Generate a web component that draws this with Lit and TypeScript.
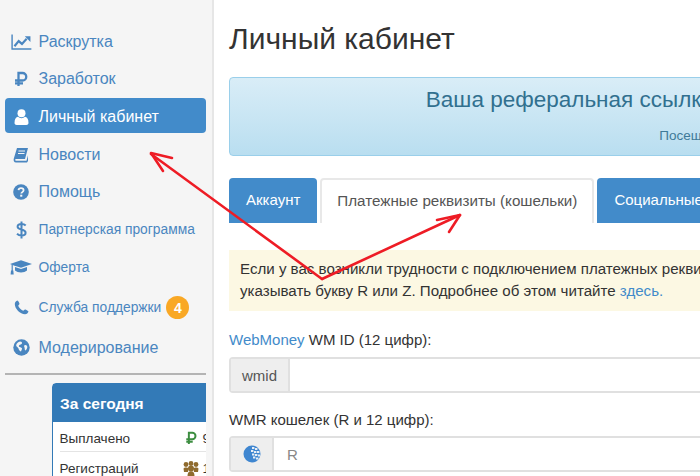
import { LitElement, html, css, svg } from "lit";
import { customElement } from "lit/decorators.js";

const ICONS: Record<string, unknown> = {
  chart: svg`<svg width="21" height="16" viewBox="0 0 22 17"><path d="M1 .5V16H21.500" fill="none" stroke="currentColor" stroke-width="1.500"/><path d="M3.500 13L8 7.500l3.500 3L16.500 5" fill="none" stroke="currentColor" stroke-width="2.300"/><path d="M14.500 2.500h6v6z" fill="currentColor"/></svg>`,
  ruble: svg`<svg width="14" height="16" viewBox="0 0 14 16"><path d="M4.500 15V2h4a3.500 3.500 0 0 1 0 7.500H1M1 12.300h8" fill="none" stroke="currentColor" stroke-width="2.300"/></svg>`,
  user: svg`<svg width="15" height="16" viewBox="0 0 15 16"><circle cx="7.500" cy="4.300" r="4" fill="currentColor"/><path d="M0.500 14c0-4 1.500-6 3.500-6.200 1 .9 2.200 1.400 3.500 1.400S10 8.700 11 7.800c2 .2 3.500 2.200 3.500 6.200 0 1.300-1 2-2.200 2H2.700C1.500 16 .5 15.300.5 14z" fill="currentColor"/></svg>`,
  book: svg`<svg width="16" height="16" viewBox="0 0 16 16"><path d="M4 1h11l-3 11H2.800c-.8 0-.8 1.800.2 1.800h10.500l1.500-5.500V14l-1 1.500H3C1 15.500.2 13.500.8 11.500z" fill="currentColor"/><path d="M5.500 4h6.500M5 6.500h6.500" stroke="#f5f5f5" stroke-width="1"/></svg>`,
  help: svg`<svg width="16" height="16" viewBox="0 0 16 16"><circle cx="8" cy="8" r="7.800" fill="currentColor"/><path d="M5.500 6.200C5.700 4.800 6.700 4.100 8 4.100c1.500 0 2.600.9 2.600 2.200 0 1.800-2.300 1.800-2.300 3.300" fill="none" stroke="#f5f5f5" stroke-width="1.800"/><rect x="7.200" y="10.700" width="2.100" height="2" fill="#f5f5f5"/></svg>`,
  dollar: svg`<svg width="11" height="18" viewBox="0 0 11 18"><path d="M9.700 4.500C8.800 3.600 7.300 3 5.500 3 3.300 3 1.600 4 1.600 5.700c0 3.700 8 2 8 6 0 1.800-1.800 2.800-4 2.800-2 0-3.500-.7-4.600-1.800M5.500 .5v17" fill="none" stroke="currentColor" stroke-width="2"/></svg>`,
  cap: svg`<svg width="22" height="15" viewBox="0 0 22 15" fill="currentColor"><path d="M11 .3L22 4 11 7.800 3.200 5.200 0 4z"/><path d="M5 7l6 2 6-2v3.600c-1.500 1.300-3.500 1.900-6 1.900s-4.500-.6-6-1.900z"/><path d="M1.600 4.500h1.200v6.500H1.600zM1 10.500h2.300l.4 4H.6z"/></svg>`,
  phone: svg`<svg width="15" height="15" viewBox="0 0 15 15"><path d="M3.500.5C2 1 .8 2.200.8 4c0 4.800 5.400 10.300 10.200 10.300 1.800 0 3-1.200 3.500-2.700.1-.5-3-2.400-3.600-2.100L9.200 10.800C7.500 10.200 4.800 7.500 4.200 5.800L5.500 4.100C5.800 3.500 4 .4 3.500.5z" fill="currentColor"/></svg>`,
  globe: svg`<svg width="17" height="17" viewBox="0 0 17 17"><circle cx="8.500" cy="8.500" r="8.200" fill="currentColor"/><path d="M7 2.500c2 .2 2.800 1.600 1.500 2.600-1 .8-2.400.6-2.700 2-.2 1.200 2 1 3 2 .8.900-.5 2-.8 3.500-1.500-.4-2.200-1.700-2.500-3C4.800 8 2.800 7.500 3.200 6c.5-1.800 2-3.200 3.800-3.500zM12 6c1.300-.2 2.300.8 2.300 2 0 1.400-.9 3-2 3.500-.9-.8-.3-2.300-.9-3.300C11 7.400 11 6.300 12 6z" fill="#f5f5f5"/></svg>`,
};

const NAV = [
  { icon: "chart", label: "Раскрутка", cls: "" },
  { icon: "ruble", label: "Заработок", cls: "" },
  { icon: "user", label: "Личный кабинет", cls: "active" },
  { icon: "book", label: "Новости", cls: "" },
  { icon: "help", label: "Помощь", cls: "" },
  { icon: "dollar", label: "Партнерская программа", cls: "small" },
  { icon: "cap", label: "Оферта", cls: "small" },
  { icon: "phone", label: "Служба поддержки", cls: "small", badge: "4" },
  { icon: "globe", label: "Модерирование", cls: "" },
];

@customElement("app-root")
export class AppRoot extends LitElement {
  static styles = css`
    :host {
      display: block;
      position: relative;
      width: 700px;
      height: 476px;
      overflow: hidden;
      background: #fff;
      font-family: "Liberation Sans", Arial, sans-serif;
      color: #333;
    }
    .layout { display: flex; height: 476px; }
    .side {
      width: 214px;
      flex: none;
      box-sizing: border-box;
      background: #f5f5f5;
      border-right: 2px solid #e6e6e6;
      padding: 23px 6px 0 5px;
      overflow: hidden;
    }
    .nav { display: flex; flex-direction: column; }
    .item {
      display: flex;
      align-items: center;
      box-sizing: border-box;
      height: 35px;
      padding-top: 2px;
      margin-bottom: 2.700px;
      border-radius: 4px;
      color: #4a86c0;
      font-size: 16px;
    }
    .item.small { font-size: 13.800px; }
    .item:nth-child(7) { margin-bottom: 5px; }
    .item:nth-child(8) { margin-bottom: 5px; }
    .item.active { background: #428bca; color: #fff; }
    .ic { width: 33.500px; flex: none; display: flex; justify-content: center; padding-right: 1px; box-sizing: border-box; }
    .ic svg { display: block; }
    .badge {
      margin-left: 5px;
      width: 23px; height: 23px;
      border-radius: 50%;
      background: #f9a825;
      color: #fff;
      font-size: 14px;
      font-weight: 700;
      display: flex; align-items: center; justify-content: center;
    }
    .rule { height: 2px; background: #b4b4b4; margin-top: 6.500px; }
    .clip { overflow: hidden; padding-top: 8px; }
    .card {
      margin: 0 -60px 0 47px;
      border: 1px solid #337ab7;
      border-radius: 4px 4px 0 0;
      background: #fff;
    }
    .card h3 {
      margin: 0;
      height: 38px;
      line-height: 40px;
      background: #337ab7;
      color: #fff;
      font-size: 15.500px;
      padding: 0 7px;
    }
    .row {
      display: flex;
      align-items: center;
      box-sizing: border-box;
      height: 30px;
      padding-top: 3px;
      margin: 0 0 0 6.500px;
      border-bottom: 1px solid #e4e4e4;
      font-size: 13.500px;
      color: #333;
    }
    .row .name { width: 125px; flex: none; }
    .row svg { display: block; flex: none; }
    .row .rub { margin-right: 6px; }
    .row .bears { margin: 0 4px 0 -2px; }

    .main { flex: 1; min-width: 0; padding: 0 0 0 15px; overflow: hidden; white-space: nowrap; }
    h1 {
      margin: 22px 0 0;
      font-size: 30px;
      line-height: 34px;
      font-weight: 400;
      color: #333;
    }
    .jumbo {
      margin-top: 21px;
      width: 682px;
      height: 79px;
      box-sizing: border-box;
      border: 1px solid #9acfea;
      border-radius: 4px;
      background: linear-gradient(#d9edf7, #b9def0);
      color: #31708f;
      text-align: center;
      padding-top: 9px;
    }
    .jumbo .t { font-size: 22.500px; line-height: 26px; }
    .jumbo .s { font-size: 13.500px; line-height: 16px; margin-top: 15px; padding-left: 251px; color: #3f7a98; }
    .tabs { display: flex; gap: 3px; margin-top: 22px; height: 45px; }
    .tab {
      box-sizing: border-box;
      height: 45px;
      background: #428bca;
      color: #fff;
      border-radius: 4px 4px 0 0;
      font-size: 15px;
      display: flex; align-items: center;
      padding: 0 17px 2px;
    }
    .tab.on {
      background: #fff;
      color: #555;
      border: 2px solid #e8e8e8;
      border-bottom: 0;
      font-size: 15.200px;
      padding: 0 15px 2px;
    }
    .alert {
      margin-top: 27px;
      width: 800px;
      height: 61px;
      box-sizing: border-box;
      background: #fcf8e3;
      color: #333;
      font-size: 15.100px;
      line-height: 22px;
      padding: 8px 11px;
    }
    a { color: #428bca; text-decoration: none; }
    .label { font-size: 15px; line-height: 20px; margin-top: 19px; color: #333; }
    .label.b { margin-top: 17px; }
    .group {
      display: flex;
      margin-top: 7px;
      width: 800px;
      height: 36px;
      box-sizing: border-box;
      border: 2px solid #e0e0e0;
      border-radius: 4px;
      background: #fff;
      font-size: 15px;
    }
    .label.b + .group { margin-top: 6px; }
    .addon {
      background: #eee;
      color: #555;
      border-right: 2px solid #e0e0e0;
      display: flex; align-items: center; justify-content: center;
      box-sizing: border-box;
    }
    .addon.w { width: 59px; }
    .addon.g { width: 43px; }
    .val { color: #888; padding-left: 13px; display: flex; align-items: center; }
    .arrows { position: absolute; left: 0; top: 0; pointer-events: none; }
  `;

  render() {
    return html`
      <div class="layout">
        <aside class="side">
          <nav class="nav">
            ${NAV.map(
              (n) => html`<div class="item ${n.cls}">
                <span class="ic">${ICONS[n.icon]}</span>
                <span>${n.label}</span>
                ${n.badge ? html`<span class="badge">${n.badge}</span>` : ""}
              </div>`
            )}
          </nav>
          <div class="rule"></div>
          <div class="clip">
            <div class="card">
              <h3>За сегодня</h3>
              <div class="row">
                <span class="name">Выплачено</span>
                <svg class="rub" width="12" height="14" viewBox="0 0 14 16" style="color:#3c8d40"><path d="M4.500 15V2h4a3.500 3.500 0 0 1 0 7.500H1.500M1.500 12.300h7.500" fill="none" stroke="currentColor" stroke-width="2.300"/></svg>
                <span>9</span>
              </div>
              <div class="row">
                <span class="name">Регистраций</span>
                <svg class="bears" width="16" height="15" viewBox="0 0 16 15" fill="#8f6b2e"><circle cx="3" cy="3.500" r="2.400"/><circle cx="13" cy="3.500" r="2.400"/><circle cx="8" cy="2.500" r="2.400"/><path d="M.5 7.500C1 6 5 6 5.500 7.500L5 11H1zM10.500 7.500C11 6 15 6 15.500 7.500L15 11h-4z"/><circle cx="8" cy="7.500" r="3"/><path d="M4.500 15c0-3 1-4.800 3.500-4.800s3.500 1.800 3.500 4.800z"/></svg>
                <span>1</span>
              </div>
            </div>
          </div>
        </aside>
        <main class="main">
          <h1>Личный кабинет</h1>
          <section class="jumbo">
            <div class="t">Ваша реферальная ссылка</div>
            <div class="s">Посещений</div>
          </section>
          <div class="tabs">
            <div class="tab">Аккаунт</div>
            <div class="tab on">Платежные реквизиты (кошельки)</div>
            <div class="tab">Социальные сети</div>
          </div>
          <div class="alert">
            Если у вас возникли трудности с подключением платежных реквизитов<br />
            указывать букву R или Z. Подробнее об этом читайте <a>здесь.</a>
          </div>
          <div class="label"><a>WebMoney</a> WM ID (12 цифр):</div>
          <div class="group"><div class="addon w">wmid</div></div>
          <div class="label b">WMR кошелек (R и 12 цифр):</div>
          <div class="group">
            <div class="addon g">
              <svg width="18" height="18" viewBox="0 0 18 18">
                <circle cx="9" cy="9" r="8.500" fill="#3f86d0"/>
                <g fill="#e8eef5"><rect x="9" y="2" width="2.400" height="2"/><rect x="12" y="3" width="2.400" height="2"/><rect x="8" y="5" width="2.400" height="2"/><rect x="11" y="6" width="2.400" height="2"/><rect x="14" y="6" width="2.400" height="2"/><rect x="9" y="8.500" width="2.400" height="2"/><rect x="12" y="9" width="2.400" height="2"/><rect x="15" y="9.500" width="2" height="2"/><rect x="10" y="11.500" width="2.400" height="2"/><rect x="13" y="12.500" width="2.400" height="2"/></g>
              </svg>
            </div>
            <div class="val">R</div>
          </div>
        </main>
      </div>
      <svg class="arrows" width="700" height="476" viewBox="0 0 700 476" fill="none" stroke="#ee1c25" stroke-width="2.600" stroke-linejoin="round" stroke-linecap="round">
        <path d="M322 279L151 154"/>
        <path d="M151 153L172 158M151 153L163 171"/>
        <path d="M322 279L460 215"/>
        <path d="M460 215L437 220M460 215L449 232"/>
      </svg>
    `;
  }
}
